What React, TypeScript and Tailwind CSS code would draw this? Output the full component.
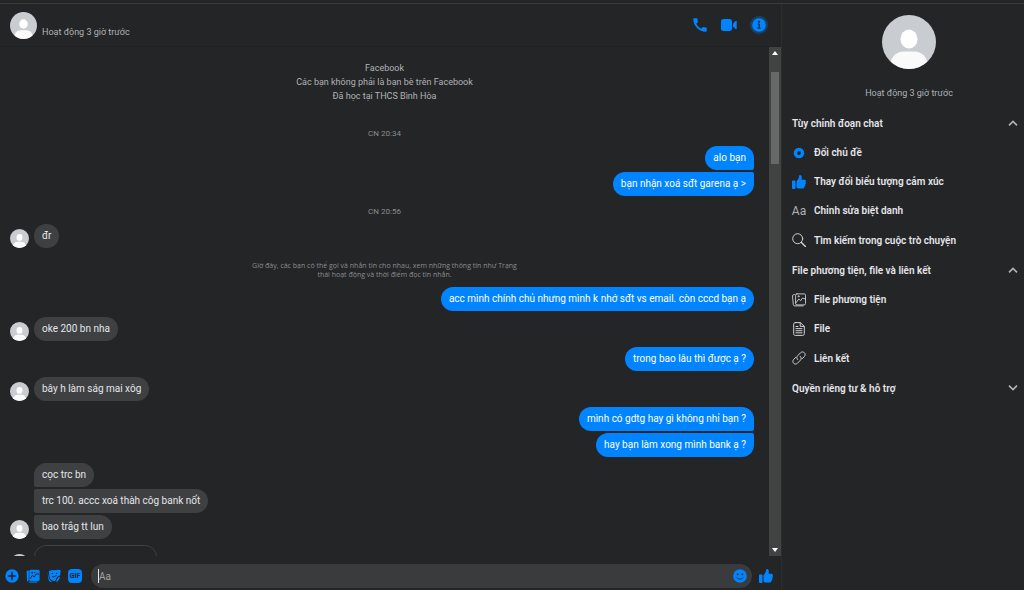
import type { ReactNode } from "react";
import { MdCall } from "react-icons/md";

const THUMB =
  "M0 9.4C0 8.600.6 8 1.400 8h2.200C4.400 8 5 8.600 5 9.400v9.200c0 .8-.6 1.400-1.400 1.400H1.400C.6 20 0 19.400 0 18.600V9.400zM6.400 9.800c0-.9.5-1.500 1.200-2.300C8.900 6.100 10 4.300 10.100 1.600 10.100.6 10.700 0 11.600 0c1.600 0 2.400 1.500 2.400 3.600 0 1.200-.2 2.200-.4 3.100h4c1.300 0 2.300.9 2.300 2.100 0 .7-.3 1.200-.7 1.600.5.4.7.9.7 1.500 0 .9-.5 1.600-1.300 1.900.2.300.3.700.3 1.100 0 1-.6 1.700-1.500 1.900.1.200.1.400.1.700 0 1.100-1 1.900-2.300 1.900H11c-1.900 0-3.200-.4-4.100-1-.3-.2-.5-.5-.5-.9V9.800z";

function ThumbIcon({ className }: { className: string }) {
  return (
    <svg viewBox="0 0 20 20" className={className} fill="#0084ff" aria-hidden="true">
      <path d={THUMB} />
    </svg>
  );
}

function Avatar({ className }: { className: string }) {
  return (
    <svg viewBox="0 0 54 54" className={`shrink-0 rounded-full ${className}`} role="img" aria-label="Ảnh đại diện">
      <rect width="54" height="54" fill="#c9ccd1" />
      <ellipse cx="27" cy="24" rx="8.500" ry="9.500" fill="#fff" />
      <path d="M8 54v-4c1-8 6-13.500 14-13.500h10c8 0 13 5.500 14 13.500v4z" fill="#fafafb" />
    </svg>
  );
}

function VideoIcon() {
  return (
    <svg viewBox="0 0 16 12" className="h-3 w-4" fill="#0084ff" aria-hidden="true">
      <rect width="11" height="12" rx="2.500" />
      <path d="M12 4.500l2.500-2.500c.6-.5 1.200-.3 1.200.5v7c0 .8-.6 1-1.200.5L12 7.500z" />
    </svg>
  );
}

function InfoIcon() {
  return (
    <svg viewBox="0 0 20 20" className="size-5" aria-hidden="true">
      <circle cx="10" cy="10" r="9" fill="#0084ff" opacity=".3" />
      <circle cx="10" cy="10" r="6.800" fill="#0084ff" />
      <circle cx="10" cy="6.800" r="1.100" fill="#242526" />
      <path d="M8.700 9h1.500v4M8.500 13.200h3" stroke="#242526" strokeWidth="1.200" fill="none" strokeLinejoin="round" />
    </svg>
  );
}

function ComposerIcon({ kind }: { kind: "plus" | "photo" | "sticker" }) {
  return (
    <svg viewBox="0 0 14 14" className="size-3.5" fill="#0084ff" aria-hidden="true">
      {kind === "plus" && (
        <>
          <circle cx="7" cy="7" r="6.700" />
          <path d="M7 3.500v7M3.500 7h7" stroke="#242526" strokeWidth="1.500" strokeLinecap="round" />
        </>
      )}
      {kind === "photo" && (
        <>
          <path d="M.6 2L2.800 1.200v9.600l-.8 1.600c-.6 0-1-.3-1-.9z" />
          <path d="M2.600 12.600h8.800l-.6 1.200-7.200-.2c-.7 0-1-.4-1-1z" />
          <rect x="3.300" y=".8" width="10.300" height="11.300" rx="1.500" />
          <path d="M4.200 9.600l2.200-3.200 1.800 1.500 2.100-3 2.800.3" stroke="#242526" strokeWidth="1" fill="none" />
          <circle cx="6.200" cy="3.700" r=".9" fill="#242526" />
          <circle cx="8.800" cy="3.700" r=".6" fill="#242526" />
        </>
      )}
      {kind === "sticker" && (
        <>
          <path d="M4.500 1.200l7.600-.4c1.100 0 1.700.8 1.500 1.900L13 6.400c-2.300.3-4 1.900-4.400 5l-1.900.9C4 11.200 2.600 9.500 2.300 7l-.5-5z" />
          <path d="M.4 2.600l1.500 5.800c.5 2.200 1.800 3.600 3.600 4.600-2 .3-3.400-.4-3.900-2.300z" />
          <path d="M13 7.400c-.4 2.800-1.700 4.800-3.700 5.900.2-3.100 1.500-5.200 3.700-5.900z" />
          <path d="M4.600 4.800l1.500-.5M9 4.300l1.300.2M5 7.300c1.300 1.200 3 .8 4.400-1.200" stroke="#242526" strokeWidth="1" fill="none" />
        </>
      )}
    </svg>
  );
}

type Item = { label: string; icon: ReactNode };

const line = { fill: "none", stroke: "#d0d2d6", strokeLinecap: "round", strokeLinejoin: "round" } as const;

const customize: Item[] = [
  {
    label: "Đổi chủ đề",
    icon: (
      <svg viewBox="0 0 14 14" className="size-3.5">
        <circle cx="7" cy="7" r="3.600" fill="none" stroke="#0084ff" strokeWidth="3.400" />
      </svg>
    ),
  },
  { label: "Thay đổi biểu tượng cảm xúc", icon: <ThumbIcon className="size-3.5" /> },
  { label: "Chỉnh sửa biệt danh", icon: <span className="text-xs font-normal text-[#b0b3b8]">Aa</span> },
  {
    label: "Tìm kiếm trong cuộc trò chuyện",
    icon: (
      <svg viewBox="0 0 14 14" className="size-3.5" {...line}>
        <circle cx="5.700" cy="5.700" r="5" />
        <path d="M9.400 9.400l4 4" strokeWidth="1.400" />
      </svg>
    ),
  },
];

const media: Item[] = [
  {
    label: "File phương tiện",
    icon: (
      <svg viewBox="0 0 14 14" className="size-3.5" {...line}>
        <path d="M2.500 1.500l-1.400.5c-.5.200-.7.500-.6 1l.8 8.600c.1.800.6 1.300 1.400 1.300h8.500" strokeWidth=".9" />
        <rect x="3.600" y=".9" width="9.900" height="11" rx="1.300" strokeWidth=".9" />
        <path d="M3.800 10l3-4 1.800 1.700L10.500 5l2.800 1" strokeWidth=".9" />
        <circle cx="6.500" cy="3.300" r=".6" strokeWidth=".8" />
      </svg>
    ),
  },
  {
    label: "File",
    icon: (
      <svg viewBox="0 0 14 14" className="size-3.5" {...line}>
        <path d="M3.300.6h5l4 3.800v7.400c0 1-.6 1.600-1.600 1.600H3.300c-1 0-1.600-.6-1.600-1.600V2.200c0-1 .6-1.600 1.600-1.600z" />
        <path d="M8.200.8v3.600h4M4 4.500h2M4 6.600h6M4 8.700h6M4 10.800h6" />
      </svg>
    ),
  },
  {
    label: "Liên kết",
    icon: (
      <svg viewBox="0 0 14 14" className="size-3.5" {...line}>
        <path d="M5.700 8.600c-1.200-1.100-1.200-2.700-.1-3.800l2.900-3c1.100-1.100 2.700-1.100 3.800-.1 1.100 1.100 1.100 2.700 0 3.900l-2 2" />
        <path d="M8.300 5.400c1.200 1.100 1.200 2.700.1 3.800l-2.900 3c-1.100 1.100-2.700 1.100-3.800.1-1.100-1.100-1.100-2.700 0-3.900l2-2" />
      </svg>
    ),
  },
];

function Section({ title, items = [] }: { title: string; items?: Item[] }) {
  const open = items.length > 0;
  return (
    <section>
      <button type="button" aria-expanded={open} className="flex h-[30px] w-full items-center justify-between text-left">
        {title}
        <svg viewBox="0 0 10 6" className="h-1.5 w-2.5" fill="none" stroke="#b0b3b8" strokeWidth="1.600">
          <path d={open ? "M1 5.400l4-4 4 4" : "M1 .6l4 4 4-4"} />
        </svg>
      </button>
      {items.map((item) => (
        <button key={item.label} type="button" className="flex h-[29px] w-full items-center gap-2 text-left last:h-[30px]">
          <span className="flex w-3.5 shrink-0 justify-center">{item.icon}</span>
          {item.label}
        </button>
      ))}
    </section>
  );
}

/** Consecutive messages of one sender; theirs carry an avatar beside the last bubble. */
function Group({ mine = false, texts }: { mine?: boolean; texts: string[] }) {
  return (
    <div className={`flex items-end gap-[5px] ${mine ? "justify-end" : ""}`}>
      {!mine && <Avatar className="size-[19px]" />}
      <div className={`flex flex-col gap-0.5 ${mine ? "items-end" : "items-start"}`}>
        {texts.map((text, i) => (
          <p
            key={text}
            className={[
              "h-6 rounded-xl px-2 leading-6",
              mine ? "bg-[#0084ff] text-white" : "bg-[#3e4042] text-[#e4e6eb]",
              i > 0 && (mine ? "rounded-tr-xs" : "rounded-tl-xs"),
              i < texts.length - 1 && (mine ? "rounded-br-xs" : "rounded-bl-xs"),
            ]
              .filter(Boolean)
              .join(" ")}
          >
            {text}
          </p>
        ))}
      </div>
    </div>
  );
}

export default function App() {
  return (
    <div className="flex h-screen flex-col overflow-hidden bg-[#242526] pt-[3px] font-[Roboto,'Noto_Sans',sans-serif] text-[10px] text-[#e4e6eb]">
      <div className="flex min-h-0 flex-1 border-t border-[#3a3b3c]">
        <main className="flex min-w-0 flex-1 flex-col">
          <header className="flex h-[43px] shrink-0 items-center justify-between border-b border-[#202122] pr-3 pl-2.5">
            <div className="flex items-center gap-[5px]">
              <Avatar className="size-[27px]" />
              <p className="pt-3.5 text-[9px] leading-3 text-[#b0b3b8]">Hoạt động 3 giờ trước</p>
            </div>
            <div className="flex items-center gap-3">
              <button type="button" aria-label="Gọi thoại">
                <MdCall className="size-[18px] text-[#0084ff]" />
              </button>
              <button type="button" aria-label="Gọi video">
                <VideoIcon />
              </button>
              <button type="button" aria-label="Thông tin">
                <InfoIcon />
              </button>
            </div>
          </header>

          <div className="flex min-h-0 flex-1">
            <div className="flex min-w-0 flex-1 flex-col gap-1.5 overflow-hidden pt-3.5 pr-[15px] pl-2.5 *:shrink-0">
              <div className="pl-[5px] text-center text-[9px] leading-[14px] text-[#b0b3b8]">
                <p>Facebook</p>
                <p>Các bạn không phải là bạn bè trên Facebook</p>
                <p>Đã học tại THCS Bình Hòa</p>
              </div>
              <p className="pt-[19px] pl-[5px] text-center text-[8px] leading-3 text-[#8a8d91]">CN 20:34</p>
              <Group mine texts={["alo bạn", "bạn nhận xoá sđt garena ạ >"]} />
              <p className="pt-1 pl-[5px] text-center text-[8px] leading-3 text-[#8a8d91]">CN 20:56</p>
              <Group texts={["đr"]} />
              <p className="mx-auto w-[280px] pt-[7px] pb-0.5 pl-[5px] text-center font-['Open_Sans','Noto_Sans',sans-serif] text-[7px] leading-[9px] text-[#8a8d91]">
                Giờ đây, các bạn có thể gọi và nhắn tin cho nhau, xem những thông tin như Trạng thái hoạt động và thời
                điểm đọc tin nhắn.
              </p>
              <Group mine texts={["acc mình chính chủ nhưng mình k nhớ sđt vs email. còn cccd bạn ạ"]} />
              <Group texts={["oke 200 bn nha"]} />
              <Group mine texts={["trong bao lâu thì được ạ ?"]} />
              <Group texts={["bây h làm ság mai xôg"]} />
              <Group mine texts={["mình có gdtg hay gì không nhỉ bạn ?", "hay bạn làm xong mình bank ạ ?"]} />
              <Group texts={["cọc trc bn", "trc 100. accc xoá thàh côg bank nốt", "bao trắg tt lun"]} />
              <div className="flex items-end gap-[5px]">
                <Avatar className="mb-[-4px] size-[19px]" />
                <div className="h-6 w-[123px] rounded-xl border border-[#3e4042]" />
              </div>
            </div>

            <div className="flex w-3 shrink-0 flex-col items-center justify-between bg-[#424242]" aria-hidden="true">
              <div className="flex h-[117px] flex-col items-center justify-between pt-1">
                <svg viewBox="0 0 6 4" className="h-1 w-1.5" fill="#fff">
                  <path d="M3 0l3 4H0z" />
                </svg>
                <div className="h-[92px] w-2 bg-[#686868]" />
              </div>
              <svg viewBox="0 0 6 4" className="mb-1 h-1 w-1.5" fill="#fff">
                <path d="M3 4L0 0h6z" />
              </svg>
            </div>
          </div>

          <form
            className="flex h-[34px] shrink-0 items-center gap-[7px] pt-1.5 pr-2 pl-[5px]"
            onSubmit={(e) => e.preventDefault()}
          >
            <button type="button" aria-label="Thêm">
              <ComposerIcon kind="plus" />
            </button>
            <button type="button" aria-label="Đính kèm ảnh">
              <ComposerIcon kind="photo" />
            </button>
            <button type="button" aria-label="Nhãn dán">
              <ComposerIcon kind="sticker" />
            </button>
            <button
              type="button"
              className="size-3.5 rounded-[4px] bg-[#0084ff] text-center text-[7px] leading-[14px] font-bold text-[#242526]"
            >
              GIF
            </button>
            <div className="ml-0.5 flex h-6 min-w-0 flex-1 items-center rounded-xl bg-[#3a3b3c] pr-[5px] pl-[7px]">
              <span className="h-3.5 w-px bg-[#e4e6eb]" />
              <input
                type="text"
                aria-label="Tin nhắn"
                placeholder="Aa"
                className="h-6 min-w-0 flex-1 bg-transparent text-[10px] outline-none placeholder:text-[#a0a3a8]"
              />
              <button type="button" aria-label="Biểu tượng cảm xúc">
                <svg viewBox="0 0 14 14" className="size-3.5">
                  <circle cx="7" cy="7" r="6.800" fill="#0084ff" />
                  <circle cx="4.700" cy="5.200" r="1" fill="#303132" />
                  <circle cx="9.300" cy="5.200" r="1" fill="#303132" />
                  <path d="M3.800 8.700c1.800 1.900 4.600 1.900 6.400 0" stroke="#303132" fill="none" strokeLinecap="round" />
                </svg>
              </button>
            </div>
            <button type="button" aria-label="Gửi lượt thích">
              <ThumbIcon className="size-3.5" />
            </button>
          </form>
        </main>

        <aside className="flex w-[243px] shrink-0 flex-col border-l border-[#2c2d2e] pr-1.5 pl-2.5 font-semibold">
          <div className="flex flex-col items-center pt-[11px] pl-2">
            <Avatar className="size-[54px]" />
            <p className="mt-4 mb-[7px] text-[9px] leading-4 font-normal text-[#b0b3b8]">Hoạt động 3 giờ trước</p>
          </div>
          <Section title="Tùy chỉnh đoạn chat" items={customize} />
          <Section title="File phương tiện, file và liên kết" items={media} />
          <Section title="Quyền riêng tư & hỗ trợ" />
        </aside>
      </div>
    </div>
  );
}
